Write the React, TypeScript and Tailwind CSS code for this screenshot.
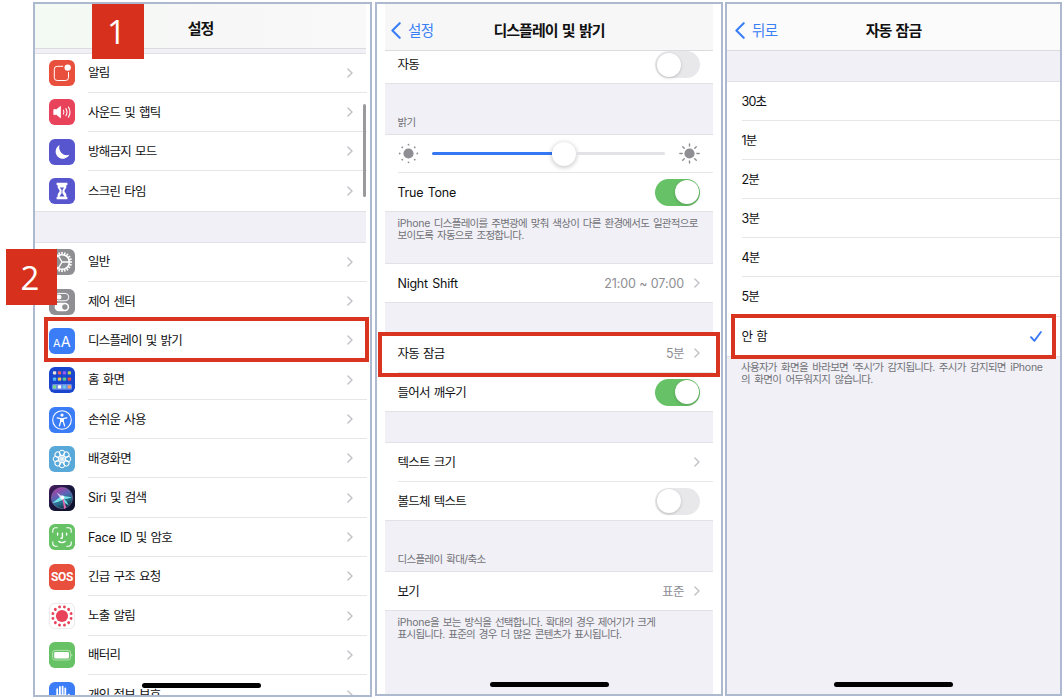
import React from "react";

const FONT = "font-['Inter','Noto_Sans_CJK_KR',sans-serif]";
const LABEL = "pt-[2px] text-[12.5px] tracking-[-0.75px] [word-spacing:1.2px] text-[#111113]";
const TITLE = "text-[15px] font-bold tracking-[-0.95px] [word-spacing:1.6px] text-[#111]";

function Chevron() {
  return (
    <svg className="h-[10px] w-[6px] shrink-0" viewBox="0 0 6 10" fill="none">
      <path d="M0.9 0.9L5 5L0.9 9.1" stroke="#c2c2c6" strokeWidth="1.4" strokeLinecap="round" strokeLinejoin="round" />
    </svg>
  );
}

function Tile({ bg, children }: { bg: string; children: React.ReactNode }) {
  return (
    <svg className="size-[26px] shrink-0" viewBox="0 0 26 26" fill="none">
      <rect width="26" height="26" rx="5.8" fill={bg} />
      {children}
    </svg>
  );
}

const around = (n: number) => Array.from({ length: n }, (_, i) => (i * 360) / n);

const icons: Record<string, React.ReactNode> = {
  bell: (
    <Tile bg="#e94f3d">
      <path d="M14.2 6.3H8.2A2.9 2.9 0 0 0 5.3 9.2V17.6A2.9 2.9 0 0 0 8.2 20.5H16.6A2.9 2.9 0 0 0 19.5 17.6V12" stroke="#fff" strokeWidth="1" />
      <circle cx="18.7" cy="7.6" r="3.2" fill="#fff" />
    </Tile>
  ),
  sound: (
    <Tile bg="#e8435a">
      <path d="M4.8 10.6H7.6L11.5 7.4V18.8L7.6 15.6H4.8Z" fill="#fff" stroke="#fff" strokeWidth="0.8" strokeLinejoin="round" />
      <path d="M14.4 11.2Q15.6 13.1 14.4 15M16.9 9.6Q19.1 13.1 16.9 16.6M19.4 8Q22.6 13.1 19.4 18.2" stroke="#fff" strokeWidth="1.1" strokeLinecap="round" />
    </Tile>
  ),
  moon: (
    <Tile bg="#5856ce">
      <path d="M10.6 6.1A7.2 7.2 0 1 0 20.3 15.7A7.6 7.6 0 0 1 10.6 6.1Z" fill="#fff" />
    </Tile>
  ),
  hourglass: (
    <Tile bg="#5856ce">
      <path d="M7.6 4.8H18.4V6.9H17.4V8.6C17.4 10.8 15.4 11.8 15.4 13C15.4 14.2 17.4 15.2 17.4 17.4V19.1H18.4V21.3H7.6V19.1H8.6V17.4C8.6 15.2 10.6 14.2 10.6 13C10.6 11.8 8.6 10.8 8.6 8.6V6.9H7.6Z" fill="#fff" />
      <path d="M10.8 9.6H15.2L13.4 12V15.2L15.6 18.6H10.4L12.6 15.2V12Z" fill="#5856ce" />
    </Tile>
  ),
  gear: (
    <Tile bg="#8e8e93">
      {around(20).map((a) => (
        <path key={a} d="M13 2.9V5.6" stroke="#fff" strokeWidth="1.6" transform={`rotate(${a} 13 13)`} />
      ))}
      <circle cx="13" cy="13" r="7.3" stroke="#fff" strokeWidth="1.5" />
      <path d="M13 13H20.5M13 13L9.3 6.6M13 13L9.3 19.4" stroke="#fff" strokeWidth="1.3" />
    </Tile>
  ),
  controls: (
    <Tile bg="#8e8e93">
      <rect x="6" y="4.4" width="13.8" height="7.4" rx="3.7" stroke="#fff" strokeWidth="1" />
      <circle cx="10" cy="8.1" r="2.5" fill="#fff" />
      <rect x="5.6" y="13.8" width="14.6" height="8.4" rx="4.2" fill="#fff" />
      <circle cx="15.9" cy="18" r="2.7" fill="#8e8e93" />
    </Tile>
  ),
  display: (
    <Tile bg="#3a7df6">
      <text x="4" y="19" fontSize="10.8" fill="#fff" className="font-['Inter',sans-serif]">A</text>
      <text x="11.8" y="19" fontSize="14.4" fill="#fff" className="font-['Inter',sans-serif]">A</text>
    </Tile>
  ),
  home: (
    <Tile bg="#1a45cf">
      {["#ece4d8", "#ea5a68", "#9a5cf0", "#b6cf4c", "#55b9f0", "#f1c44a", "#58c98f", "#e8503f"].map((c, i) => (
        <rect key={i} x={3.9 + (i % 4) * 4.95} y={4.2 + Math.floor(i / 4) * 6.2} width="3.3" height="3.3" rx="0.8" fill={c} />
      ))}
      <rect x="3" y="17" width="20" height="5.8" rx="1.4" fill="#6b8be6" />
      {["#7edc8a", "#ffffff", "#6cc9ee", "#f0a268"].map((c, i) => (
        <rect key={c} x={3.9 + i * 4.95} y="18.2" width="3.3" height="3.3" rx="0.8" fill={c} />
      ))}
    </Tile>
  ),
  access: (
    <Tile bg="#3a7df6">
      <circle cx="13" cy="13" r="9.3" stroke="#fff" strokeWidth="1.1" />
      <circle cx="13" cy="8.1" r="1.6" fill="#fff" />
      <path d="M8.2 10.9L11.8 11.6V14.2L10.4 18.9M17.8 10.9L14.2 11.6V14.2L15.6 18.9" stroke="#fff" strokeWidth="1.3" strokeLinecap="round" strokeLinejoin="round" />
      <path d="M11.5 11.2H14.5V15H11.5Z" fill="#fff" />
    </Tile>
  ),
  wallpaper: (
    <Tile bg="#58a8da">
      {around(8).map((a) => (
        <circle key={a} cx="13" cy="6.9" r="2.7" stroke="#fff" strokeWidth="1" transform={`rotate(${a} 13 13)`} />
      ))}
      {around(8).map((a) => (
        <ellipse key={a} cx="13" cy="10.3" rx="1.2" ry="1.7" stroke="#fff" strokeWidth="0.7" transform={`rotate(${a + 22.5} 13 13)`} />
      ))}
      <circle cx="13" cy="13" r="1.1" fill="#fff" />
    </Tile>
  ),
  siri: (
    <svg className="size-[26px] shrink-0" viewBox="0 0 26 26" fill="none">
      <defs>
        <linearGradient id="siriBg" x1="0" y1="0" x2="1" y2="1">
          <stop offset="0" stopColor="#4a1d62" />
          <stop offset="0.5" stopColor="#17163c" />
          <stop offset="1" stopColor="#0d1228" />
        </linearGradient>
        <linearGradient id="siriOrb" x1="0.2" y1="0" x2="0.7" y2="1">
          <stop offset="0" stopColor="#b8379e" />
          <stop offset="0.42" stopColor="#5966b8" />
          <stop offset="0.7" stopColor="#236f88" />
          <stop offset="1" stopColor="#16203c" />
        </linearGradient>
      </defs>
      <rect width="26" height="26" rx="5.8" fill="url(#siriBg)" />
      <circle cx="13" cy="13" r="10.6" fill="url(#siriOrb)" stroke="#8a7fb0" strokeWidth="0.5" />
      <path d="M3.2 18.2Q9 13.6 13 10.6Q16.5 11.8 23 12.2Q17.4 14.4 15 13.8Q18 16.5 19.8 20.6Q15.2 17.8 13.4 15Q9 17.2 3.2 18.2Z" fill="#74e4e6" />
      <path d="M12.8 11L15.2 24L17.2 22.6Q15 17 14.6 12Z" fill="#e868b0" />
      <path d="M7.6 7.4L14.4 12L12.2 14.6Z" fill="#d9c5f2" />
      <circle cx="13.3" cy="12.6" r="2" fill="#f4fdff" />
    </svg>
  ),
  face: (
    <Tile bg="#66c265">
      <path d="M3.8 8.3V6.4A2.6 2.6 0 0 1 6.4 3.8H8.3M17.7 3.8H19.6A2.6 2.6 0 0 1 22.2 6.4V8.3M22.2 17.7V19.6A2.6 2.6 0 0 1 19.6 22.2H17.7M8.3 22.2H6.4A2.6 2.6 0 0 1 3.8 19.6V17.7" stroke="#fff" strokeWidth="1.1" strokeLinecap="round" />
      <path d="M8.6 9.2V11M17.6 9.2V11M13.4 9.2V13.2Q13.4 14.4 12 14.3M9.8 17.4Q13 19.8 16.2 17.4" stroke="#fff" strokeWidth="1.4" strokeLinecap="round" />
    </Tile>
  ),
  sos: (
    <div className="flex size-[26px] shrink-0 items-center justify-center rounded-[5.8px] bg-[#e94f3d] font-['Roboto',sans-serif] text-[12px] leading-[16px] font-bold tracking-[-0.3px] text-white">
      SOS
    </div>
  ),
  exposure: (
    <svg className="size-[26px] shrink-0" viewBox="0 0 26 26" fill="none">
      <rect x="0.4" y="0.4" width="25.2" height="25.2" rx="5.4" fill="#fff" stroke="#e3e3e6" strokeWidth="0.8" />
      <circle cx="13" cy="13" r="6.1" fill="#e8435a" />
      {around(12).map((a) => (
        <circle key={a} cx="13" cy="3.6" r="1.45" fill="#e8435a" transform={`rotate(${a + 15} 13 13)`} />
      ))}
    </svg>
  ),
  battery: (
    <Tile bg="#66c265">
      <rect x="3.6" y="8.4" width="18" height="9.6" rx="2.4" stroke="#b9e4b9" strokeWidth="0.9" />
      <rect x="5.2" y="10" width="14.8" height="6.4" rx="1.1" fill="#fff" />
      <path d="M22.7 11.8Q24 13.2 22.7 14.6Z" fill="#fff" />
    </Tile>
  ),
  hand: (
    <Tile bg="#3a7df6">
      <path d="M8.2 15V7.2M10.9 13V5M13.6 13V4.6M16.3 14V6.4M19.8 12.6L17.6 16" stroke="#fff" strokeWidth="1.8" strokeLinecap="round" />
      <path d="M7.3 12.5H17.2V17L19 15Q18 22 13 22Q7.3 22 7.3 15Z" fill="#fff" />
    </Tile>
  ),
};

function MenuRow({ icon, children, last }: { icon: string; children: React.ReactNode; last?: boolean }) {
  return (
    <div className="flex h-[39.3px] shrink-0 items-center pl-[14px]">
      {icons[icon]}
      <div className={`ml-[13px] flex h-full flex-1 items-center justify-between pr-[14.5px] ${last ? "" : "border-b border-[#e6e6e8]"}`}>
        <span className={LABEL}>{children}</span>
        <Chevron />
      </div>
    </div>
  );
}

function L({ children }: { children: React.ReactNode }) {
  return <span className="tracking-[-0.25px]">{children}</span>;
}

function Toggle({ on }: { on?: boolean }) {
  return (
    <div className={`flex h-[27px] w-[45px] shrink-0 items-center rounded-full px-[1.5px] ${on ? "justify-end bg-[#67c166]" : "bg-[#e8e8ea]"}`}>
      <div className="size-[24px] rounded-full bg-white shadow-[0_1px_3px_rgba(0,0,0,0.2)]" />
    </div>
  );
}

function Back({ label }: { label: string }) {
  return (
    <div className="flex flex-1 items-center gap-[7px] text-[#3b7ff5]">
      <svg className="h-[17px] w-[10px]" viewBox="0 0 10 17" fill="none">
        <path d="M8.7 1.2L1.4 8.5L8.7 15.8" stroke="currentColor" strokeWidth="2.1" strokeLinecap="round" strokeLinejoin="round" />
      </svg>
      <span className="pt-px text-[14.5px] tracking-[-0.6px]">{label}</span>
    </div>
  );
}

function Row({ label, value, height, chevron, line, children }: { label: string; value?: string; height: string; chevron?: boolean; line?: boolean; children?: React.ReactNode }) {
  return (
    <div className={`shrink-0 bg-white pl-[12.5px] ${height}`}>
      <div className={`flex h-full items-center pr-[13px] ${line ? "border-b border-[#e6e6e8]" : ""}`}>
        <span className={`flex-1 ${LABEL}`}>
          {/^[A-Z]/.test(label) ? <L>{label}</L> : label}
        </span>
        {value && <span className={`mr-[10px] pt-[2px] text-[12.5px] text-[#8e8e93] ${value.includes(":") ? "tracking-[-0.1px]" : "tracking-[-0.5px]"}`}>{value}</span>}
        {chevron && <Chevron />}
        {children}
      </div>
    </div>
  );
}

const RULE = "border-y border-[#e2e2e6] bg-[#f0f0f6]";
const NOTE = "text-[10.5px] leading-[12.4px] text-[#727277] whitespace-nowrap";

function Panel({ className, children }: { className: string; children: React.ReactNode }) {
  return <section className={`relative flex shrink-0 flex-col overflow-hidden border-2 border-[#adb9ce] bg-white ${className}`}>{children}</section>;
}

function HomeBar({ className }: { className: string }) {
  return <div className={`absolute h-[5px] w-[119px] rounded-full bg-black ${className}`} />;
}

function Sun({ rays }: { rays?: boolean }) {
  return (
    <svg className="size-[21px] shrink-0" viewBox="0 0 21 21" fill="none">
      <circle cx="10.5" cy="10.5" r="5.1" fill="#8e8e93" />
      {around(8).map((a) =>
        rays ? (
          <path key={a} d="M10.5 0.9V3.1" stroke="#8e8e93" strokeWidth="1.4" strokeLinecap="round" transform={`rotate(${a} 10.5 10.5)`} />
        ) : (
          <circle key={a} cx="10.5" cy="1.7" r="0.9" fill="#8e8e93" transform={`rotate(${a} 10.5 10.5)`} />
        ),
      )}
    </svg>
  );
}

export default function App() {
  return (
    <main className={`relative flex h-[697px] w-[1062px] items-start overflow-hidden bg-white pt-[2px] pl-[33px] ${FONT}`}>
      <Panel className="h-[695px] w-[339px]">
        <div className="mr-[4px] flex h-[44.5px] shrink-0 items-center justify-center border-b border-[#dcdce0] bg-linear-to-r from-[#f3faf3] via-[#f7f7f7] to-[#f9f9f9] pt-[6px]">
          <h1 className={TITLE}>설정</h1>
        </div>
        <div className="mr-[4px] h-[5px] shrink-0 border-b border-[#e2e2e6] bg-[#f0f0f6]" />
        <div className="mr-[3px]">
          <MenuRow icon="bell">알림</MenuRow>
          <MenuRow icon="sound">사운드 및 햅틱</MenuRow>
          <MenuRow icon="moon">방해금지 모드</MenuRow>
          <MenuRow icon="hourglass" last>스크린 타임</MenuRow>
        </div>
        <div className={`mr-[4px] h-[32px] shrink-0 ${RULE}`} />
        <div className="mr-[3px]">
          <MenuRow icon="gear">일반</MenuRow>
          <MenuRow icon="controls">제어 센터</MenuRow>
          <MenuRow icon="display">디스플레이 및 밝기</MenuRow>
          <MenuRow icon="home">홈 화면</MenuRow>
          <MenuRow icon="access">손쉬운 사용</MenuRow>
          <MenuRow icon="wallpaper">배경화면</MenuRow>
          <MenuRow icon="siri"><L>Siri</L> 및 검색</MenuRow>
          <MenuRow icon="face"><L>Face ID</L> 및 암호</MenuRow>
          <MenuRow icon="sos">긴급 구조 요청</MenuRow>
          <MenuRow icon="exposure">노출 알림</MenuRow>
          <MenuRow icon="battery">배터리</MenuRow>
          <MenuRow icon="hand" last>개인 정보 보호</MenuRow>
        </div>
        <div className="absolute top-[100px] left-[327.5px] h-[93px] w-[3px] rounded-full bg-[#9a9a9d]" />
        <HomeBar className="top-[679px] left-[107px]" />
      </Panel>

      <Panel className="ml-[3px] h-[694px] w-[348px] px-[8px]">
        <div className="flex h-[47px] shrink-0 items-center border-b border-[#dcdce0] bg-[#f7f7f8] pt-[7px] pl-[6px]">
          <Back label="설정" />
          <h2 className={`pt-px ${TITLE}`}>디스플레이 및 밝기</h2>
          <div className="flex-1 pr-[6px]" />
        </div>
        <Row label="자동" height="h-[32px] pb-[5px]"><Toggle /></Row>
        <div className={`flex h-[52px] shrink-0 items-end pb-[5px] pl-[12.5px] ${RULE}`}>
          <p className={`${NOTE} tracking-[-0.6px]`}>밝기</p>
        </div>
        <div className="h-[38px] shrink-0 pl-[12.5px]">
          <div className="flex h-full items-center border-b border-[#e6e6e8] pr-[13.5px]">
            <Sun />
            <div className="mr-[14px] ml-[13px] flex flex-1 items-center">
              <div className="h-[3px] w-[120.5px] rounded-l-full bg-[#3478f6]" />
              <div className="size-[24px] shrink-0 rounded-full bg-white shadow-[0_1px_5px_rgba(0,0,0,0.28)]" />
              <div className="h-[3px] flex-1 rounded-r-full bg-[#e3e3e5]" />
            </div>
            <Sun rays />
          </div>
        </div>
        <Row label="True Tone" height="h-[38px]"><Toggle on /></Row>
        <div className={`h-[53px] shrink-0 pt-[6px] pl-[12.5px] ${RULE}`}>
          <p className={`${NOTE} tracking-[-0.72px] [word-spacing:1.5px]`}><L>iPhone</L> 디스플레이를 주변광에 맞춰 색상이 다른 환경에서도 일관적으로<br />보이도록 자동으로 조정합니다.</p>
        </div>
        <Row label="Night Shift" value="21:00 ~ 07:00" chevron height="h-[38px]" />
        <div className={`h-[32px] shrink-0 ${RULE}`} />
        <Row label="자동 잠금" value="5분" chevron line height="h-[39px]" />
        <Row label="들어서 깨우기" height="h-[38px]"><Toggle on /></Row>
        <div className={`h-[32px] shrink-0 ${RULE}`} />
        <Row label="텍스트 크기" chevron line height="h-[39px]" />
        <Row label="볼드체 텍스트" height="h-[38px]"><Toggle /></Row>
        <div className={`flex h-[52px] shrink-0 items-end pb-[5px] pl-[12.5px] ${RULE}`}>
          <p className={`${NOTE} tracking-[-0.65px] [word-spacing:1.5px]`}>디스플레이 확대/축소</p>
        </div>
        <Row label="보기" value="표준" chevron height="h-[38px]" />
        <div className="flex-1 border-t border-[#e2e2e6] bg-[#f0f0f6] pt-[6px] pl-[12.5px]">
          <p className={`${NOTE} tracking-[-0.72px] [word-spacing:1.5px]`}><L>iPhone</L>을 보는 방식을 선택합니다. 확대의 경우 제어기가 크게<br />표시됩니다. 표준의 경우 더 많은 콘텐츠가 표시됩니다.</p>
        </div>
        <HomeBar className="top-[678px] left-[113px]" />
      </Panel>

      <Panel className="ml-[2px] h-[694px] w-[337px]">
        <div className="flex h-[47px] shrink-0 items-center border-b border-[#dcdce0] bg-[#fbfbfc] pt-[7px] pl-[8px]">
          <Back label="뒤로" />
          <h2 className={`pt-px ${TITLE}`}>자동 잠금</h2>
          <div className="flex-1 pr-[8px]" />
        </div>
        <div className="h-[31px] shrink-0 border-b border-[#e2e2e6] bg-[#f0f0f6]" />
        {["30초", "1분", "2분", "3분", "4분", "5분", "안 함"].map((t, i) => (
          <div key={t} className="h-[39.1px] shrink-0 pl-[14.5px]">
            <div className={`flex h-full items-center justify-between pr-[18px] ${i < 6 ? "border-b border-[#e6e6e8]" : ""}`}>
              <span className={LABEL}>{t}</span>
              {i === 6 && (
                <svg className="h-[11px] w-[12px]" viewBox="0 0 12 11" fill="none">
                  <path d="M1 6.2L4.4 9.9L10.9 1" stroke="#3478f6" strokeWidth="1.8" strokeLinecap="round" strokeLinejoin="round" />
                </svg>
              )}
            </div>
          </div>
        ))}
        <div className="flex-1 border-t border-[#e2e2e6] bg-[#f0f0f6] pt-[5px] pl-[14px]">
          <p className={`${NOTE} tracking-[-0.72px] [word-spacing:2.1px]`}>사용자가 화면을 바라보면 ‘주시’가 감지됩니다. 주시가 감지되면 <L>iPhone</L><br />의 화면이 어두워지지 않습니다.</p>
        </div>
        <HomeBar className="top-[678px] left-[107px]" />
      </Panel>

      <div className="absolute top-[317px] left-[44px] h-[45px] w-[325px] border-4 border-[#d93420]" />
      <div className="absolute top-[332px] left-[378px] h-[45px] w-[342px] border-4 border-[#d93420]" />
      <div className="absolute top-[314px] left-[731px] h-[45px] w-[325px] border-4 border-[#d93420]" />
      <div className="absolute top-[4px] left-[92px] flex h-[55px] w-[52px] items-center justify-center bg-[#d7311e] pr-[3px] font-['Open_Sans',sans-serif] text-[33px] leading-none text-white">1</div>
      <div className="absolute top-[249px] left-[6px] flex h-[56px] w-[51px] items-center justify-center bg-[#d7311e] pr-[3px] font-['Open_Sans',sans-serif] text-[33px] leading-none text-white">2</div>
    </main>
  );
}
